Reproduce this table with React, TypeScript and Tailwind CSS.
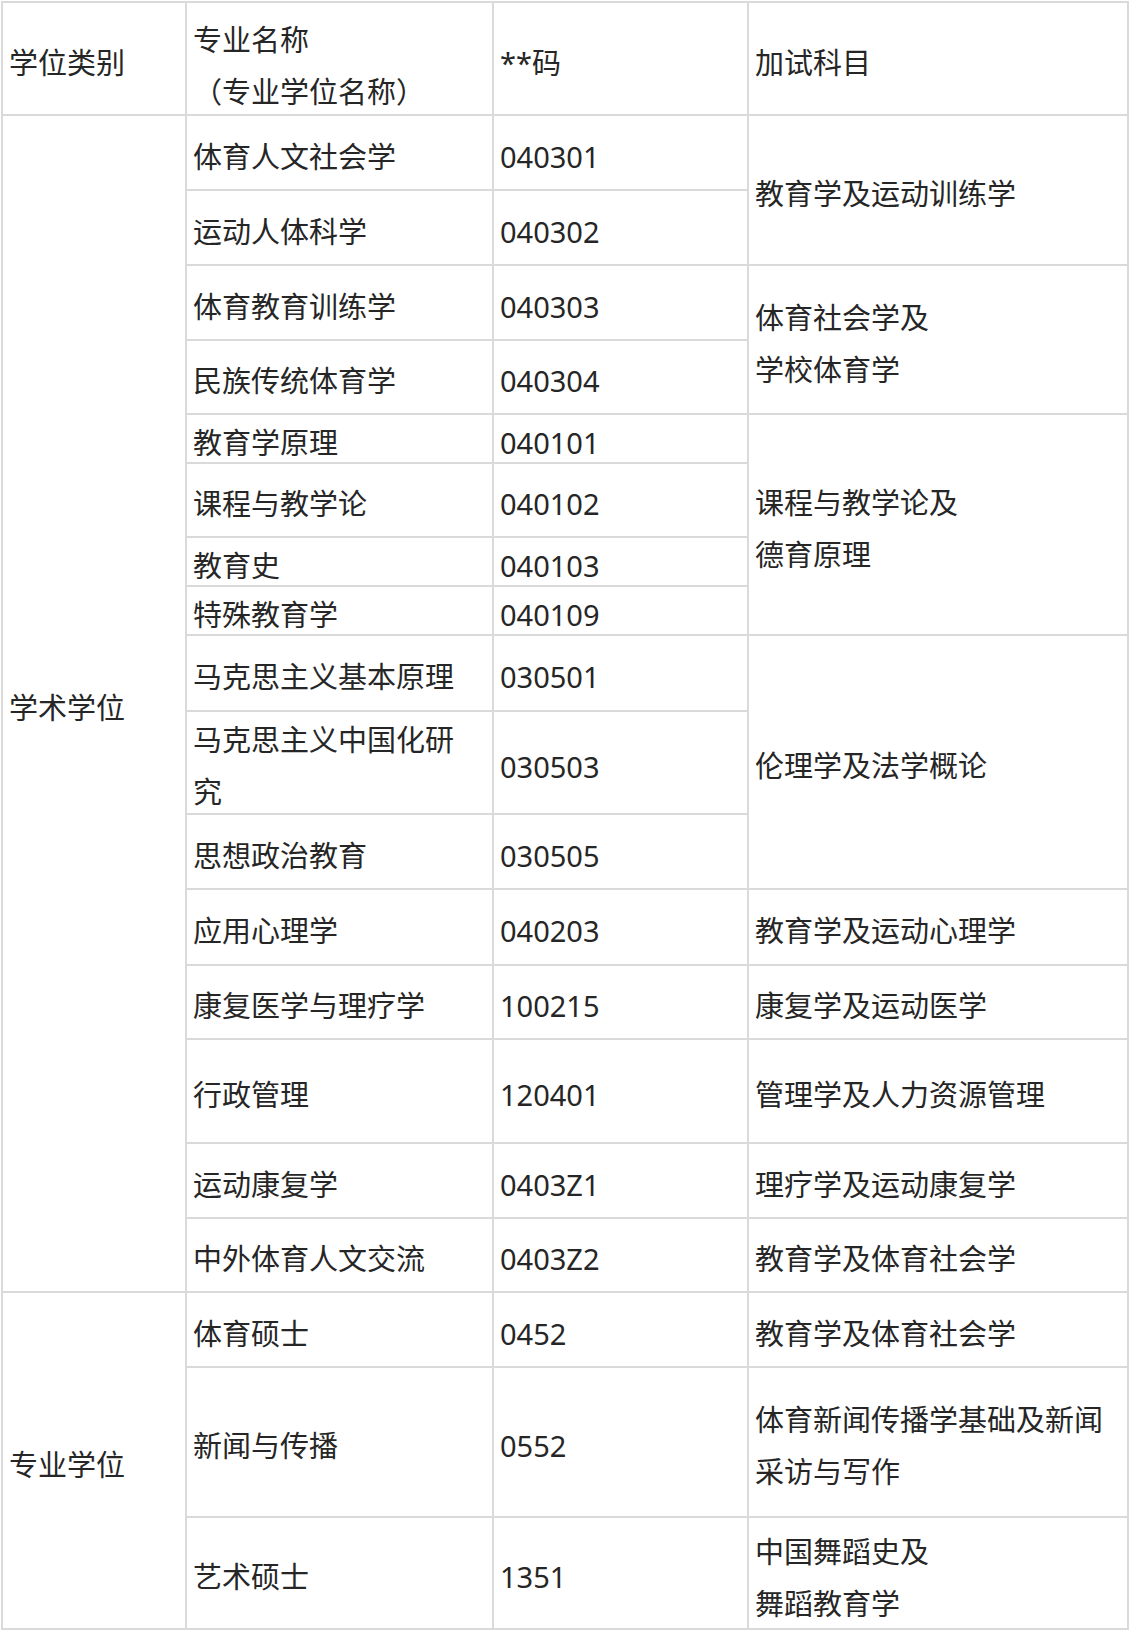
import React from "react";

const base = "border-2 border-[#dadada] align-middle pl-[6px] pr-2 pb-0 text-left font-normal";
const td = `${base} pt-2 leading-[52px]`;
const tdShort = `${base} pt-[8px] leading-[33px]`;

export default function App() {
  return (
    <div
      className="bg-white text-[#262626] text-[29px] w-[1130px] min-h-[1639px]"
      style={{ fontFamily: '"Noto Sans", "Noto Sans CJK SC", sans-serif' }}
    >
      <table className="table-fixed w-[1126px] ml-px mt-px">
        <colgroup>
          <col className="w-[184px]" />
          <col className="w-[307px]" />
          <col className="w-[255px]" />
          <col className="w-[380px]" />
        </colgroup>
        <tbody>
          {/* header */}
          <tr className="h-[113px]">
            <td className={td}>学位类别</td>
            <td className={`${base} pt-[11px] leading-[52px]`}>
              <div className="-mb-1">
                专业名称
                <br />
                （专业学位名称）
              </div>
            </td>
            <td className={td}>**码</td>
            <td className={td}>加试科目</td>
          </tr>

          {/* 学术学位 */}
          <tr className="h-[75px]">
            <td className={td} rowSpan={16}>
              学术学位
            </td>
            <td className={td}>体育人文社会学</td>
            <td className={td}>040301</td>
            <td className={td} rowSpan={2}>
              教育学及运动训练学
            </td>
          </tr>
          <tr className="h-[75px]">
            <td className={td}>运动人体科学</td>
            <td className={td}>040302</td>
          </tr>
          <tr className="h-[75px]">
            <td className={td}>体育教育训练学</td>
            <td className={td}>040303</td>
            <td className={td} rowSpan={2}>
              体育社会学及
              <br />
              学校体育学
            </td>
          </tr>
          <tr className="h-[74px]">
            <td className={td}>民族传统体育学</td>
            <td className={td}>040304</td>
          </tr>
          <tr className="h-[49px]">
            <td className={tdShort}>教育学原理</td>
            <td className={tdShort}>040101</td>
            <td className={td} rowSpan={4}>
              课程与教学论及
              <br />
              德育原理
            </td>
          </tr>
          <tr className="h-[74px]">
            <td className={td}>课程与教学论</td>
            <td className={td}>040102</td>
          </tr>
          <tr className="h-[49px]">
            <td className={tdShort}>教育史</td>
            <td className={tdShort}>040103</td>
          </tr>
          <tr className="h-[49px]">
            <td className={tdShort}>特殊教育学</td>
            <td className={tdShort}>040109</td>
          </tr>
          <tr className="h-[76px]">
            <td className={td}>马克思主义基本原理</td>
            <td className={td}>030501</td>
            <td className={td} rowSpan={3}>
              伦理学及法学概论
            </td>
          </tr>
          <tr className="h-[103px]">
            <td className={`${base} pt-[2px] leading-[52px]`}>
              <div className="-mb-[5px]">
                马克思主义中国化研
                <br />究
              </div>
            </td>
            <td className={td}>030503</td>
          </tr>
          <tr className="h-[75px]">
            <td className={td}>思想政治教育</td>
            <td className={td}>030505</td>
          </tr>
          <tr className="h-[76px]">
            <td className={td}>应用心理学</td>
            <td className={td}>040203</td>
            <td className={td}>教育学及运动心理学</td>
          </tr>
          <tr className="h-[74px]">
            <td className={td}>康复医学与理疗学</td>
            <td className={td}>100215</td>
            <td className={td}>康复学及运动医学</td>
          </tr>
          <tr className="h-[104px]">
            <td className={td}>行政管理</td>
            <td className={td}>120401</td>
            <td className={td}>管理学及人力资源管理</td>
          </tr>
          <tr className="h-[75px]">
            <td className={td}>运动康复学</td>
            <td className={td}>0403Z1</td>
            <td className={td}>理疗学及运动康复学</td>
          </tr>
          <tr className="h-[74px]">
            <td className={td}>中外体育人文交流</td>
            <td className={td}>0403Z2</td>
            <td className={td}>教育学及体育社会学</td>
          </tr>

          {/* 专业学位 */}
          <tr className="h-[75px]">
            <td className={td} rowSpan={3}>
              专业学位
            </td>
            <td className={td}>体育硕士</td>
            <td className={td}>0452</td>
            <td className={td}>教育学及体育社会学</td>
          </tr>
          <tr className="h-[150px]">
            <td className={td}>新闻与传播</td>
            <td className={td}>0552</td>
            <td className={td}>
              体育新闻传播学基础及新闻
              <br />
              采访与写作
            </td>
          </tr>
          <tr className="h-[112px]">
            <td className={td}>艺术硕士</td>
            <td className={td}>1351</td>
            <td className={`${base} pt-[8px] leading-[52px]`}>
              <div className="-mb-[2px]">
                中国舞蹈史及
                <br />
                舞蹈教育学
              </div>
            </td>
          </tr>
        </tbody>
      </table>
    </div>
  );
}
